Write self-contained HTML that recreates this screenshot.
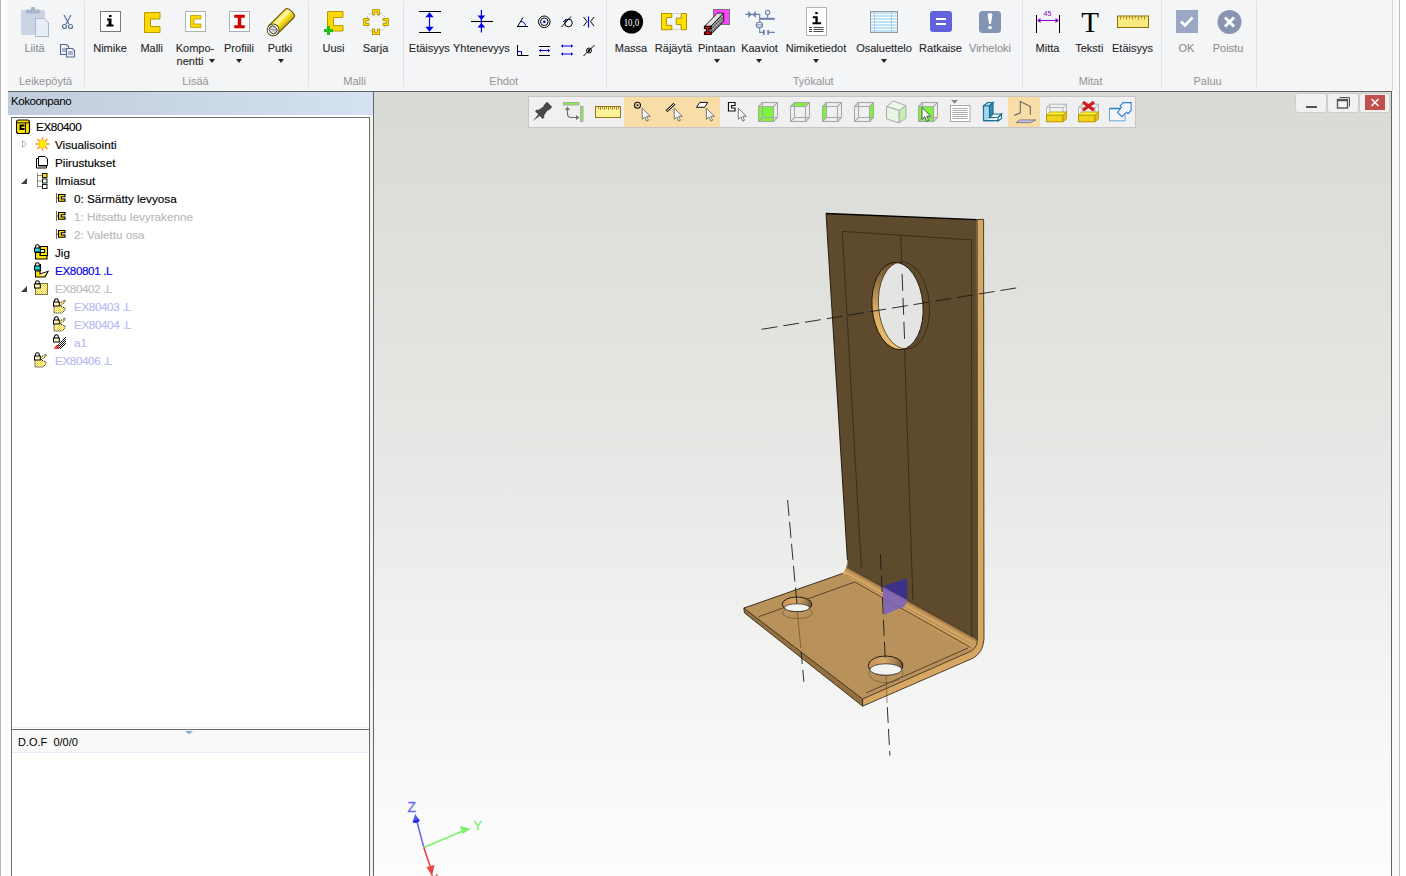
<!DOCTYPE html>
<html><head><meta charset="utf-8">
<style>
*{margin:0;padding:0;box-sizing:border-box}
html,body{width:1406px;height:876px;overflow:hidden;background:#fff;font-family:"Liberation Sans",sans-serif}
.a{position:absolute}
#ribbon{left:8px;top:0;width:1384px;height:91px;background:#f4f5f7}
.sep{position:absolute;top:1px;width:1px;height:86px;background:#dfe1e4}
.lbl{position:absolute;-webkit-text-stroke:0.1px currentColor;font-size:11px;color:#262626;white-space:nowrap;line-height:13px;transform:translateX(-50%)}
.glbl{position:absolute;font-size:11px;color:#939393;white-space:nowrap;line-height:13px;transform:translateX(-50%);top:75px}
.dis{color:#8e8e8e}
.arr{position:absolute;width:0;height:0;border-left:3.5px solid transparent;border-right:3.5px solid transparent;border-top:4px solid #222;transform:translateX(-50%)}
#darkline{left:8px;top:91px;width:1384px;height:1px;background:#626262}
#hdr{left:8px;top:92px;width:365px;height:23px;background:linear-gradient(90deg,#c0ccd9,#d4e2f1)}
#tree{left:11px;top:117px;width:359px;height:770px;border:1px solid #6d6d6d;background:#fff}
#vp{left:373px;top:92px;width:1019px;height:790px;border-left:1px solid #646464;border-right:1px solid #646464;background:linear-gradient(180deg,#d8dad5 0%,#e7e8e5 46%,#f2f2f1 70%,#f8f8f8 84%,#fdfdfd 100%)}
.ti{position:absolute;-webkit-text-stroke:0.15px currentColor;font-size:11.7px;line-height:14px;white-space:nowrap;color:#000}
</style></head><body>
<div class="a" style="left:0;top:0;width:1px;height:876px;background:#b5b5b5"></div>
<div class="a" style="left:1399px;top:0;width:1px;height:876px;background:#bdbdbd"></div>
<div class="a" style="left:1392px;top:0;width:7px;height:876px;background:#f8f8f8"></div><div class="a" style="left:1392px;top:0;width:1px;height:91px;background:#d6d6d6"></div>
<div class="a" style="left:370px;top:115px;width:3px;height:761px;background:#f2f2f2"></div>
<div id="ribbon" class="a"></div>
<div class="lbl dis" style="left:34.5px;top:42px">Liitä</div>
<div class="lbl " style="left:110px;top:42px">Nimike</div>
<div class="lbl " style="left:151.7px;top:42px">Malli</div>
<div class="lbl " style="left:195px;top:42px">Kompo-</div>
<div class="lbl " style="left:239px;top:42px">Profiili</div>
<div class="lbl " style="left:280px;top:42px">Putki</div>
<div class="lbl " style="left:333.5px;top:42px">Uusi</div>
<div class="lbl " style="left:375.5px;top:42px">Sarja</div>
<div class="lbl " style="left:429.3px;top:42px">Etäisyys</div>
<div class="lbl " style="left:481.4px;top:42px">Yhtenevyys</div>
<div class="lbl " style="left:631px;top:42px">Massa</div>
<div class="lbl " style="left:673.5px;top:42px">Räjäytä</div>
<div class="lbl " style="left:716.7px;top:42px">Pintaan</div>
<div class="lbl " style="left:759.5px;top:42px">Kaaviot</div>
<div class="lbl " style="left:816px;top:42px">Nimiketiedot</div>
<div class="lbl " style="left:884px;top:42px">Osaluettelo</div>
<div class="lbl " style="left:940.5px;top:42px">Ratkaise</div>
<div class="lbl dis" style="left:990px;top:42px">Virheloki</div>
<div class="lbl " style="left:1047.5px;top:42px">Mitta</div>
<div class="lbl " style="left:1089.3px;top:42px">Teksti</div>
<div class="lbl " style="left:1132.5px;top:42px">Etäisyys</div>
<div class="lbl dis" style="left:1186.5px;top:42px">OK</div>
<div class="lbl dis" style="left:1228px;top:42px">Poistu</div>
<div class="lbl" style="left:190px;top:55px">nentti</div>
<div class="arr" style="left:211.5px;top:59px"></div>
<div class="arr" style="left:238.7px;top:59px"></div>
<div class="arr" style="left:280.5px;top:59px"></div>
<div class="arr" style="left:716.7px;top:59px"></div>
<div class="arr" style="left:759.3px;top:59px"></div>
<div class="arr" style="left:815.5px;top:59px"></div>
<div class="arr" style="left:883.5px;top:59px"></div>
<div class="glbl" style="left:45.5px">Leikepöytä</div>
<div class="glbl" style="left:195.5px">Lisää</div>
<div class="glbl" style="left:354.6px">Malli</div>
<div class="glbl" style="left:503.7px">Ehdot</div>
<div class="glbl" style="left:813.2px">Työkalut</div>
<div class="glbl" style="left:1090.6px">Mitat</div>
<div class="glbl" style="left:1207.6px">Paluu</div>
<div class="sep" style="left:84px"></div>
<div class="sep" style="left:308px"></div>
<div class="sep" style="left:403px"></div>
<div class="sep" style="left:606px"></div>
<div class="sep" style="left:1022px"></div>
<div class="sep" style="left:1161px"></div>
<div class="sep" style="left:1256px"></div>
<svg class="a" style="left:0;top:0" width="1406" height="91" viewBox="0 0 1406 91">
<!-- Liita clipboard -->
<rect x="21" y="10" width="24" height="25" rx="1.5" fill="#c9d4e4"/>
<rect x="26" y="9.5" width="14" height="4" rx="1" fill="#a9b7cc"/>
<rect x="31" y="7" width="4" height="4" rx="1" fill="#a9b7cc"/>
<path d="M35.5 18.5h9l4 4v14h-13z" fill="#e8eef8" stroke="#a9b8cc"/>
<!-- scissors -->
<g fill="none" stroke="#56709a" stroke-width="1.2"><path d="M64 15l5 9M71 15l-5 9"/><circle cx="64.5" cy="26.5" r="2"/><circle cx="70.5" cy="26.5" r="2"/></g>
<!-- copy -->
<g fill="#f4f5f7" stroke="#52689a" stroke-width="1.1"><path d="M60.5 44.5h6l2 2v8h-8z"/><path d="M66.5 48.5h6l2 2v6.5h-8z"/></g>
<g stroke="#52689a" stroke-width="0.9"><path d="M62 49h4M62 51h4M68 52h5M68 54h5"/></g>
<!-- Nimike -->
<rect x="100.5" y="11.5" width="20" height="20" fill="#fff" stroke="#7a7a7a"/>
<g fill="#000"><rect x="109" y="15" width="2.5" height="2"/><path d="M107 18.5h4.5v6h2v2h-7v-2h2v-4h-1.5z"/></g>
<!-- Malli C -->
<path d="M144.5 12.5h15.5v6.5h-9.5v7.5h9.5v6h-15.5z" fill="#ffd700" stroke="#b79b00"/>
<!-- Komponentti -->
<rect x="185.5" y="11.5" width="20" height="20" fill="#fff" stroke="#b0b0b0"/>
<path d="M190.5 15.5h10.5v3.5h-7v5h7v3.5h-10.5z" fill="#ffd700" stroke="#b79b00" stroke-width="0.8"/>
<!-- Profiili -->
<rect x="229.5" y="11.5" width="20" height="20" fill="#fff" stroke="#b0b0b0"/>
<path d="M234.5 15h10v2.5h-3.5v8h3.5v2.5h-10v-2.5h3.5v-8h-3.5z" fill="#e00000" stroke="#900" stroke-width="0.5"/>
<!-- Putki -->
<defs><linearGradient id="tubeg" x1="0" y1="0" x2="0" y2="1"><stop offset="0" stop-color="#f8e030"/><stop offset="0.35" stop-color="#fff8c0"/><stop offset="0.5" stop-color="#ffe830"/><stop offset="1" stop-color="#c8a800"/></linearGradient></defs>
<g transform="translate(273.1 29.9) rotate(-45)">
<path d="M0 -6 H23.5 A2.8 6 0 0 1 23.5 6 H0 Z" fill="url(#tubeg)" stroke="#5e4c00" stroke-width="1"/>
<circle cx="0" cy="0" r="5.9" fill="#fff" stroke="#5e4c00" stroke-width="1"/>
<ellipse cx="0" cy="0" rx="3.6" ry="4.2" fill="#d8d8d8" stroke="#333" stroke-width="0.9"/>
<path d="M-1 -2.5 L1.5 2.5" stroke="#999" stroke-width="1.2"/>
</g>
<!-- Uusi -->
<path d="M327.5 11.5h15.5v6h-9.5v8h9.5v5.5h-15.5z" fill="#ffd700" stroke="#b79b00"/>
<path d="M327 26h3v3h3v3h-3v3h-3v-3h-3v-3h3z" fill="#19c119"/>
<!-- Sarja -->
<circle cx="376" cy="22" r="10.2" fill="none" stroke="#b0b0b0" stroke-width="0.9" stroke-dasharray="2.2 1.8"/>
<g fill="#ffe000" stroke="#b08e00" stroke-width="0.9">
<path d="M372.5 9.5h7v5.5h-2.2v-3.4h-2.6v3.4h-2.2z"/>
<path d="M372.5 34.5h7v-5.5h-2.2v3.4h-2.6v-3.4h-2.2z"/>
<path d="M363.5 18.5v7h5.5v-2.2h-3.4v-2.6h3.4v-2.2z"/>
<path d="M388.5 18.5v7h-5.5v-2.2h3.4v-2.6h-3.4v-2.2z"/>
</g>
<!-- Etaisyys -->
<g stroke="#000" stroke-width="1.2"><path d="M419 11.5h22M419 32.5h22"/></g>
<path d="M429.5 14v17" stroke="#0000ee" stroke-width="1.1"/>
<path d="M425.3 17.2l4.2-5 4.2 5zM425.3 26.8l4.2 5 4.2-5z" fill="#0000ee"/>
<!-- Yhtenevyys -->
<path d="M471 21.5h22" stroke="#000" stroke-width="1.1"/>
<path d="M481.4 10v22.5" stroke="#0000ee" stroke-width="1.2"/>
<path d="M477.5 15.5l3.9 4.5 3.9-4.5zM477.5 27.5l3.9-4.5 3.9 4.5z" fill="#0000ee"/>
<!-- small constraints row1 -->
<g fill="none" stroke="#000" stroke-width="1">
<path d="M517 26.5h11M517.5 26.5l5.5-9"/>
<circle cx="544.3" cy="21.8" r="5.8"/><circle cx="544.3" cy="21.8" r="3.8"/>
<circle cx="568.5" cy="23" r="3.8"/><path d="M561.5 27l9.5-10.5"/>
<path d="M583.5 17l3.5 4.5-3.5 4.5M594 17l-3.5 4.5 3.5 4.5"/>
</g>
<path d="M521 21.5a5 5 0 0 1 4.5 5" stroke="#0000ee" fill="none" stroke-width="1"/>
<circle cx="544.3" cy="21.8" r="1.3" fill="#0000ee"/>
<path d="M563 22l3-3" stroke="#0000ee" stroke-width="1"/>
<path d="M588.5 16.5v11" stroke="#0000ee" stroke-width="1.2"/>
<!-- row2 -->
<g fill="none" stroke="#000" stroke-width="1">
<path d="M517.5 45v10.5h11"/>
<path d="M539 46.5h11M539 55.5h11"/>
<path d="M583.5 56l11-11"/><circle cx="589" cy="50.5" r="2.5"/>
</g>
<circle cx="589" cy="50.5" r="1.3" fill="#000"/>
<g stroke="#0000ee" stroke-width="1.1" fill="none"><path d="M518 51.5h3.5v3.5" stroke-width="1"/><path d="M539.5 50.5h10"/><path d="M561.5 46h11M561.5 54h11"/></g>
<path d="M539 50.5l2-1.8v3.6zM550 50.5l-2-1.8v3.6zM561 46l2-1.8v3.6zM573 46l-2-1.8v3.6zM561 54l2-1.8v3.6zM573 54l-2-1.8v3.6z" fill="#0000ee"/>
<!-- Massa -->
<circle cx="631.6" cy="22" r="11.5" fill="#000"/>
<text x="631.4" y="26" font-family="Liberation Serif" font-size="11" fill="#fff" text-anchor="middle" textLength="15.5" lengthAdjust="spacingAndGlyphs">10,0</text>
<!-- Rajayta -->
<path d="M661.5 13.5h10.3v4h-5.4v7.8h5.4v4.4h-10.3z" fill="#ffe000" stroke="#b08e00" stroke-width="1"/>
<path d="M686.5 13.5v16.2h-5.3v-5.2h-4.9v-6.3h4.9v-4.7z" fill="#ffe000" stroke="#b08e00" stroke-width="1"/>
<path d="M672.5 13.5h8.5M672.5 29.5h8.5" stroke="#999" stroke-width="0.8" stroke-dasharray="1 1"/>
<!-- Pintaan -->
<defs><pattern id="chk" width="1.4" height="1.4" patternUnits="userSpaceOnUse"><rect width="1.4" height="1.4" fill="#eee"/><rect width="0.7" height="0.7" fill="#222"/><rect x="0.7" y="0.7" width="0.7" height="0.7" fill="#222"/></pattern></defs>
<rect x="713.5" y="9.5" width="16" height="15" fill="#ff44ff" stroke="#777" stroke-width="1"/>
<path d="M704.7 26.1 L717.4 13.1 H723.7 L711 26.1 Z" fill="#e0e0e0" stroke="#111" stroke-width="0.9" stroke-linejoin="round"/>
<path d="M711 26.1 L723.7 13.1 V21.5 L711 34.2 Z" fill="url(#chk)" stroke="#111" stroke-width="0.9" stroke-linejoin="round"/>
<path d="M704.5 26.5h6.5v2.2h-2v3.3h2v2.5h-6.5v-2.5h2v-3.3h-2z" fill="#ff0000" stroke="#000" stroke-width="1.2"/>
<!-- Kaaviot -->
<g stroke="#6b82a8" stroke-width="1.1" fill="none">
<path d="M745.2 14.4h14.5v18h3.6M767.6 14.8v4M764 32.4h-1M768.2 32.4h6.6M756 24.9h7"/>
<circle cx="767.6" cy="12.5" r="2.2"/>
</g><ellipse cx="759.4" cy="24.9" rx="3.2" ry="2.7" fill="#f4f5f7" stroke="#6b82a8" stroke-width="1.1"/><path d="M756.5 24.9h6" stroke="#6b82a8" stroke-width="1"/>
<path d="M759.7 18.8h15.1" stroke="#6b82a8" stroke-width="2"/>
<path d="M763.9 30v4.8M768.2 30v4.8" stroke="#6b82a8" stroke-width="1.8"/>
<path d="M748.2 11v6.9l3.6-3.45zM755.8 11v6.9l-3.4-3.45z" fill="#6b82a8"/>
<!-- Nimiketiedot -->
<rect x="806.5" y="7.5" width="20" height="28" fill="#fff" stroke="#b4b4b4"/>
<g fill="#000"><rect x="815.3" y="12" width="2.4" height="2.2"/><path d="M812.8 16.2h4.9v6h3.4v2h-8.6v-2h2.9v-4h-2.6z"/></g>
<path d="M809 27.5h3M813.5 27.5h10M809 29.5h3M813.5 29.5h10M809 31.5h3M813.5 31.5h10" stroke="#333" stroke-width="0.9"/>
<!-- Osaluettelo -->
<rect x="870.5" y="11.5" width="27" height="21" fill="#c0e2fa" stroke="#999"/>
<path d="M871 14.5h26M871 17.5h26M871 20.5h26M871 23.5h26M871 26.5h26M871 29.5h26" stroke="#fff" stroke-width="1"/>
<path d="M874.5 12v20M891.5 12v20" stroke="#a0d0f4" stroke-width="1"/>
<!-- Ratkaise -->
<rect x="930" y="11" width="22" height="21" rx="3" fill="#6262dc"/>
<path d="M936 19h10M936 24h10" stroke="#fff" stroke-width="2"/>
<!-- Virheloki -->
<rect x="979" y="11" width="22" height="22" rx="3.5" fill="#8494b4"/>
<path d="M987.6 15a2.4 2 0 0 1 4.8 0l-1.5 9h-1.8z" fill="#fff"/><ellipse cx="990" cy="27.6" rx="2" ry="1.6" fill="#fff"/>
<!-- Mitta -->
<path d="M1036.5 15v18M1059.5 15v18" stroke="#000" stroke-width="1"/>
<path d="M1038 20.5h20" stroke="#8a00c8" stroke-width="1.1"/>
<path d="M1037 20.5l3.5-2.5v5zM1059 20.5l-3.5-2.5v5z" fill="#8a00c8"/>
<text x="1047.5" y="16" font-family="Liberation Sans" font-size="7" fill="#8a00c8" text-anchor="middle">45</text>
<!-- Teksti -->
<text x="1090" y="32.4" font-family="Liberation Serif" font-size="29" fill="#000" text-anchor="middle">T</text>
<!-- ruler -->
<rect x="1117.5" y="16" width="31" height="11.5" fill="#f8ea80" stroke="#8c6e00"/>
<path d="M1120.5 16.5v3M1123.5 16.5v2M1126.5 16.5v3M1129.5 16.5v2M1132.5 16.5v3M1135.5 16.5v2M1138.5 16.5v3M1141.5 16.5v2M1144.5 16.5v3" stroke="#8c6e00" stroke-width="0.8"/>
<!-- OK -->
<rect x="1176" y="10" width="22" height="23" fill="#9aa8c6"/>
<path d="M1181 21.5l4 4 7.5-8" stroke="#fff" stroke-width="2.6" fill="none"/>
<!-- Poistu -->
<circle cx="1229.5" cy="22" r="12" fill="#8894b0"/>
<path d="M1225 17.5l9 9M1234 17.5l-9 9" stroke="#fff" stroke-width="3"/>
</svg>
<div class="a" style="left:8px;top:90px;width:1384px;height:1px;background:#f8f8f9"></div><div id="darkline" class="a"></div>
<div id="hdr" class="a"></div>
<div id="tree" class="a"></div>
<div class="a" style="left:11px;top:94px;font-size:11.5px;line-height:14px;color:#000;letter-spacing:-0.45px">Kokoonpano</div>
<div class="ti" style="left:36px;top:119.5px;color:#000;letter-spacing:-0.4px;">EX80400</div>
<div class="ti" style="left:55px;top:137.5px;color:#000;">Visualisointi</div>
<div class="ti" style="left:55px;top:155.5px;color:#000;">Piirustukset</div>
<div class="ti" style="left:55px;top:173.5px;color:#000;">Ilmiasut</div>
<div class="ti" style="left:74px;top:191.5px;color:#000;">0: Särmätty levyosa</div>
<div class="ti" style="left:74px;top:209.5px;color:#b9b9b9;">1: Hitsattu levyrakenne</div>
<div class="ti" style="left:74px;top:227.5px;color:#b9b9b9;">2: Valettu osa</div>
<div class="ti" style="left:55px;top:245.5px;color:#000;">Jig</div>
<div class="ti" style="left:55px;top:263.5px;color:#0000f0;letter-spacing:-0.4px;">EX80801 .L</div>
<div class="ti" style="left:55px;top:281.5px;color:#bdbdbd;letter-spacing:-0.4px;">EX80402 .L</div>
<div class="ti" style="left:74px;top:299.5px;color:#b8b8f2;letter-spacing:-0.4px;">EX80403 .L</div>
<div class="ti" style="left:74px;top:317.5px;color:#b8b8f2;letter-spacing:-0.4px;">EX80404 .L</div>
<div class="ti" style="left:74px;top:335.5px;color:#b8b8f2;">a1</div>
<div class="ti" style="left:55px;top:353.5px;color:#b8b8f2;letter-spacing:-0.4px;">EX80406 .L</div>
<svg class="a" style="left:0;top:0" width="372" height="380" viewBox="0 0 372 380">
<defs>
<pattern id="dy" width="2" height="2" patternUnits="userSpaceOnUse"><rect width="2" height="2" fill="#fff"/><rect width="1" height="1" fill="#ffd800"/><rect x="1" y="1" width="1" height="1" fill="#ffd800"/></pattern>
<pattern id="dk" width="2" height="2" patternUnits="userSpaceOnUse"><rect width="2" height="2" fill="#fff"/><rect width="1" height="1" fill="#111"/><rect x="1" y="1" width="1" height="1" fill="#111"/></pattern>
</defs>
<rect x="16.5" y="120" width="13" height="13.5" rx="2" fill="#ffe100" stroke="#000" stroke-width="1.1"/><path d="M17 122.8h12M25.5 123v10" stroke="#000" stroke-width="0.9"/><path d="M24.5 124.5h-5v5.5h5v-2h-3v-1.5h3z" fill="#000"/><g stroke="#ff8a20" stroke-width="1.3"><path d="M42.5 137v14M35.5 144h14M37.5 139l10 10M47.5 139l-10 10"/></g><circle cx="42.5" cy="144" r="4" fill="#ffee00" stroke="#ffb000" stroke-width="0.6"/><path d="M22.5 140.5l4 3.5-4 3.5z" fill="#fff" stroke="#a8a8a8" stroke-width="0.9"/><path d="M36.5 158.5h2v7.5h8v2h-10z" fill="#fff" stroke="#000" stroke-width="1"/><path d="M38.5 156.5h6.5l2.5 2.5v6.5h-9z" fill="#fff" stroke="#000" stroke-width="1"/><path d="M21 184h6v-6z" fill="#404040"/><path d="M37.5 173v14M37.5 175.5h5M37.5 181h5M37.5 186.5h5" stroke="#888" stroke-width="1"/><rect x="42.5" y="173.5" width="4.5" height="4" fill="#ffe100" stroke="#000" stroke-width="0.9"/><rect x="42.5" y="179" width="4.5" height="4" fill="#fff" stroke="#000" stroke-width="0.9"/><rect x="42.5" y="184.5" width="4.5" height="4" fill="#fff" stroke="#000" stroke-width="0.9"/><path d="M56.5 193v10" stroke="#666" stroke-width="1"/><path d="M56.5 198h2" stroke="#666" stroke-width="1"/><path d="M58.5 194.5h6.5v2.2h-3.7v2.3h3.7v2.2h-6.5z" fill="#ffe100" stroke="#000" stroke-width="1.1"/><path d="M56.5 211v10" stroke="#666" stroke-width="1"/><path d="M56.5 216h2" stroke="#666" stroke-width="1"/><path d="M58.5 212.5h6.5v2.2h-3.7v2.3h3.7v2.2h-6.5z" fill="#ffe100" stroke="#000" stroke-width="1.1"/><path d="M56.5 229v10" stroke="#666" stroke-width="1"/><path d="M56.5 234h2" stroke="#666" stroke-width="1"/><path d="M58.5 230.5h6.5v2.2h-3.7v2.3h3.7v2.2h-6.5z" fill="#ffe100" stroke="#000" stroke-width="1.1"/><path d="M40 246.5H47.5V255.5H40V252.5H44.5V249.5H40Z" fill="#ffe000" stroke="#000" stroke-width="1.1"/><path d="M35.5 252.5H40V255.5H47V259H35.5Z" fill="#ffe000" stroke="#000" stroke-width="1.1"/><path d="M35.5 248.0v-1.3a1.9 1.9 0 0 1 3.8 0v1.3" fill="none" stroke="#000" stroke-width="1.1"/><rect x="34.5" y="248.0" width="5.8" height="4" fill="#1ed8e0" stroke="#000" stroke-width="1"/><path d="M40.5 264V271" stroke="#000" stroke-width="1.1"/><path d="M35.5 271H40V274L48 271.5L45 277H35.5Z" fill="#ffe000" stroke="#000" stroke-width="1.1"/><path d="M40.5 274.5L47 272L44.5 275.5H40.5Z" fill="#fff6c0"/><path d="M35.5 266.0v-1.3a1.9 1.9 0 0 1 3.8 0v1.3" fill="none" stroke="#000" stroke-width="1.1"/><rect x="34.5" y="266.0" width="5.8" height="4" fill="#1ed8e0" stroke="#000" stroke-width="1"/><path d="M21 292h6v-6z" fill="#404040"/><rect x="35" y="283" width="13" height="12" fill="url(#dy)"/><rect x="35.5" y="283.5" width="12" height="11" fill="none" stroke="#000" stroke-width="1" stroke-dasharray="1 1"/><path d="M35.5 284.0v-1.3a1.9 1.9 0 0 1 3.8 0v1.3" fill="none" stroke="#000" stroke-width="1.1"/><rect x="34.5" y="284.0" width="5.8" height="4" fill="#fff6c0" stroke="#000" stroke-width="1"/><path d="M54 306L60 303L65 300V302L60 306L65 308V310L62 313H54Z" fill="url(#dy)" stroke="#000" stroke-width="1" stroke-dasharray="1 1"/><path d="M54.5 302.0v-1.3a1.9 1.9 0 0 1 3.8 0v1.3" fill="none" stroke="#000" stroke-width="1.1"/><rect x="53.5" y="302.0" width="5.8" height="4" fill="#fff6c0" stroke="#000" stroke-width="1"/><path d="M54 324L60 321L65 318V320L60 324L65 326V328L62 331H54Z" fill="url(#dy)" stroke="#000" stroke-width="1" stroke-dasharray="1 1"/><path d="M54.5 320.0v-1.3a1.9 1.9 0 0 1 3.8 0v1.3" fill="none" stroke="#000" stroke-width="1.1"/><rect x="53.5" y="320.0" width="5.8" height="4" fill="#fff6c0" stroke="#000" stroke-width="1"/><path d="M54 349L66 336V344L61 349Z" fill="url(#dk)"/><path d="M54 349h5v-4h-3z" fill="#ff2020" opacity="0.8"/><path d="M54.5 338.0v-1.3a1.9 1.9 0 0 1 3.8 0v1.3" fill="none" stroke="#000" stroke-width="1.1"/><rect x="53.5" y="338.0" width="5.8" height="4" fill="#fff6c0" stroke="#000" stroke-width="1"/><path d="M35 360L41 357L46 354V356L41 360L46 362V364L43 367H35Z" fill="url(#dy)" stroke="#000" stroke-width="1" stroke-dasharray="1 1"/><path d="M35.5 356.0v-1.3a1.9 1.9 0 0 1 3.8 0v1.3" fill="none" stroke="#000" stroke-width="1.1"/><rect x="34.5" y="356.0" width="5.8" height="4" fill="#fff6c0" stroke="#000" stroke-width="1"/></svg>
<div class="a" style="left:12px;top:727px;width:357px;height:1px;background:#eef3fa"></div>
<div class="a" style="left:12px;top:729px;width:358px;height:1px;background:#6d6d6d"></div>
<div class="a" style="left:12px;top:730px;width:357px;height:23px;background:#f9f9f9;border-bottom:1px solid #e5eef8"></div>
<div class="a" style="left:18px;top:735px;font-size:11px;line-height:14px;color:#000;white-space:pre">D.O.F  0/0/0</div>
<svg class="a" style="left:184px;top:730px" width="10" height="6"><path d="M1 1h8l-4 3.5z" fill="#7ab0d8"/></svg>
<div id="vp" class="a"></div>
<div class="a" style="left:528px;top:96px;width:608px;height:32px;background:#f0f0f0;border:1px solid #c6c6c6"></div>
<div class="a" style="left:624px;top:97px;width:96px;height:30px;background:#f8dda7"></div>
<div class="a" style="left:1008px;top:97px;width:32px;height:30px;background:#f8dda7"></div>
<svg class="a" style="left:0;top:0" width="1406" height="876" viewBox="0 0 1406 876">
<!-- pin -->
<g transform="translate(539.75 114.25) rotate(45)" fill="#474747"><rect x="-3.6" y="-14" width="7.2" height="5.5"/><path d="M-2.6 -9h5.2l1.6 8h-8.4z"/><rect x="-5.4" y="-1.6" width="10.8" height="2.8"/><path d="M-1.1 1h2.2L0 9.5z"/></g>
<!-- icon2 -->
<rect x="563.5" y="102.5" width="15.5" height="2.5" fill="#7cf43c" stroke="#aaa" stroke-width="1"/>
<rect x="580.5" y="106.5" width="2.5" height="15" fill="#7cf43c" stroke="#aaa" stroke-width="1"/>
<path d="M567.5 108.5v5.5q0 3.5 3.5 3.5h6" fill="none" stroke="#707070" stroke-width="1.2"/>
<path d="M565 110l2.5-3.5 2.5 3.5zM576 115l3.5 2.5-3.5 2.5z" fill="#707070"/>
<!-- ruler -->
<rect x="595.5" y="106.5" width="25" height="11" fill="#fbf199" stroke="#9a7418" stroke-width="1"/>
<path d="M598.5 107v2M600.5 107v3M602.5 107v2M604.5 107v3M606.5 107v2M608.5 107v3M610.5 107v2M612.5 107v3M614.5 107v2M616.5 107v3M618.5 107v2" stroke="#9a7418" stroke-width="0.8"/>
<!-- point -->
<circle cx="637.5" cy="105.2" r="3" fill="none" stroke="#111" stroke-width="1.1"/><circle cx="637.5" cy="105.2" r="1" fill="#111"/>
<path d="M642.2 108.3v11l2.6-2.4 1.8 4.2 1.8-0.8-1.8-4h3.6z" fill="#fff" stroke="#555" stroke-width="0.8" stroke-linejoin="round"/>
<!-- line -->
<path d="M666.4 111.3l8.1-7.6" stroke="#111" stroke-width="2.6"/><path d="M666.6 111.1l7.7-7.2" stroke="#fff" stroke-width="1"/>
<path d="M674.2 108.3v11l2.6-2.4 1.8 4.2 1.8-0.8-1.8-4h3.6z" fill="#fff" stroke="#555" stroke-width="0.8" stroke-linejoin="round"/>
<!-- plane -->
<path d="M696.5 107.3l3.2-4.9h8.1l-3.2 4.9z" fill="#fff" stroke="#111" stroke-width="1"/>
<path d="M706.4 108.3v11l2.6-2.4 1.8 4.2 1.8-0.8-1.8-4h3.6z" fill="#fff" stroke="#555" stroke-width="0.8" stroke-linejoin="round"/>
<!-- C -->
<path d="M728.5 102.5h6.5v3h-3.5v2.5h3.5v3h-6.5z" fill="#fff" stroke="#111" stroke-width="1.2"/>
<path d="M738.3 108.3v11l2.6-2.4 1.8 4.2 1.8-0.8-1.8-4h3.6z" fill="#fff" stroke="#555" stroke-width="0.8" stroke-linejoin="round"/>
<rect x="758.5" y="106.5" width="15" height="15" fill="#7cf43c"/><g fill="none" stroke="#a9a9a9" stroke-width="1.1"><rect x="758.5" y="106.5" width="15" height="15"/><rect x="762.5" y="102.5" width="15" height="15"/><path d="M758.5 106.5l4-4M773.5 106.5l4-4M758.5 121.5l4-4M773.5 121.5l4-4"/></g>
<path d="M790.5 106.5l4-4h15l-4 4z" fill="#7cf43c"/><g fill="none" stroke="#a9a9a9" stroke-width="1.1"><rect x="790.5" y="106.5" width="15" height="15"/><rect x="794.5" y="102.5" width="15" height="15"/><path d="M790.5 106.5l4-4M805.5 106.5l4-4M790.5 121.5l4-4M805.5 121.5l4-4"/></g>
<path d="M822.5 106.5l4-4v15l-4 4z" fill="#7cf43c"/><g fill="none" stroke="#a9a9a9" stroke-width="1.1"><rect x="822.5" y="106.5" width="15" height="15"/><rect x="826.5" y="102.5" width="15" height="15"/><path d="M822.5 106.5l4-4M837.5 106.5l4-4M822.5 121.5l4-4M837.5 121.5l4-4"/></g>
<path d="M869.5 106.5l4-4v15l-4 4z" fill="#7cf43c"/><g fill="none" stroke="#a9a9a9" stroke-width="1.1"><rect x="854.5" y="106.5" width="15" height="15"/><rect x="858.5" y="102.5" width="15" height="15"/><path d="M854.5 106.5l4-4M869.5 106.5l4-4M854.5 121.5l4-4M869.5 121.5l4-4"/></g>
<!-- shaded cube -->
<path d="M886.5 106.5l6.5-5.5 13 4.6-6.8 4.9z" fill="#eef8e8" stroke="#aaa" stroke-width="1"/>
<path d="M886.5 106.5l12.7 4v12.4l-12.7-4z" fill="#e8f5e0" stroke="#aaa" stroke-width="1"/>
<path d="M899.2 110.5l6.8-4.9v12.4l-6.8 4.9z" fill="#c9efb8" stroke="#aaa" stroke-width="1"/>
<rect x="918.5" y="106.5" width="15" height="15" fill="#7cf43c"/><g fill="none" stroke="#a9a9a9" stroke-width="1.1"><rect x="918.5" y="106.5" width="15" height="15"/><rect x="922.5" y="102.5" width="15" height="15"/><path d="M918.5 106.5l4-4M933.5 106.5l4-4M918.5 121.5l4-4M933.5 121.5l4-4"/></g>
<path d="M922 107.4v12l2.8-2.6 2 4.5 1.9-0.9-2-4.2h3.9z" fill="#fff" stroke="#333" stroke-width="0.8" stroke-linejoin="round"/>
<!-- list -->
<path d="M951 100h7l-3.5 3.7z" fill="#888"/>
<rect x="950.5" y="105.5" width="19.5" height="16" fill="#fff" stroke="#aaa" stroke-width="1"/>
<path d="M952.5 108.5h15M952.5 110.5h15M952.5 112.5h15M952.5 114.5h15M952.5 116.5h15M952.5 118.5h15" stroke="#aaa" stroke-width="1"/>
<!-- blue L -->
<path d="M983.5 106l4-3.5h5.5l-3.5 3.5z" fill="#b8dcf0" stroke="#1e6e98" stroke-width="1.2"/>
<path d="M989.5 106l3.5-3.5v11l-3.5 3.5z" fill="#3c8cb8" stroke="#1e6e98" stroke-width="1.2"/>
<path d="M983.5 106h6v11.5h7.5l-3.5 3.2h-10z" fill="#a8d6ee" stroke="#1e6e98" stroke-width="1.2"/>
<path d="M989.5 117.5l3.5-3.5h8.5l-3.5 3.5z" fill="#fff" stroke="#1e6e98" stroke-width="1.2"/>
<path d="M998 117.5l3.5-3.5v4.5l-3.5 2.5zM983.5 120.7h14.5v-3.2" fill="#fff" stroke="#1e6e98" stroke-width="1.2"/>
<!-- polyline + plane -->
<path d="M1014 115.6l6.3-2.8v-11.3l10 5v8.2" fill="none" stroke="#6a6a6a" stroke-width="1.1"/>
<path d="M1016.2 122.6l3.6-2.7h16l-5.6 2.7z" fill="#c8c2f2" stroke="#777" stroke-width="0.9"/>
<!-- yellow boxes -->
<g fill="none" stroke="#b8b8b8" stroke-width="1"><rect x="1046.5" y="107.5" width="16.5" height="14"/><rect x="1050" y="104.2" width="16.5" height="14"/><path d="M1046.5 107.5l3.5-3.3M1063 107.5l3.5-3.3"/></g>
<path d="M1046.5 115h16.5v6.8h-16.5z" fill="#f2d21c" stroke="#b89800" stroke-width="1"/>
<path d="M1046.5 115l3.5-3h16.5l-3.5 3z" fill="#fff040" stroke="#b89800" stroke-width="0.8"/>
<path d="M1063 115l3.5-3v7l-3.5 2.8z" fill="#e0c010" stroke="#b89800" stroke-width="0.8"/>
<g fill="none" stroke="#b8b8b8" stroke-width="1"><rect x="1078.5" y="107.5" width="16.5" height="14"/><rect x="1082" y="104.2" width="16.5" height="14"/><path d="M1078.5 107.5l3.5-3.3M1095 107.5l3.5-3.3"/></g>
<path d="M1078.5 115h16.5v6.8h-16.5z" fill="#f2d21c" stroke="#b89800" stroke-width="1"/>
<path d="M1078.5 115l3.5-3h16.5l-3.5 3z" fill="#fff040" stroke="#b89800" stroke-width="0.8"/>
<path d="M1095 115l3.5-3v7l-3.5 2.8z" fill="#e0c010" stroke="#b89800" stroke-width="0.8"/>
<path d="M1083 102l11 8.3M1094 102l-11 8.3" stroke="#d01c1c" stroke-width="3.2"/>
<!-- window arrow -->
<rect x="1109.5" y="108.5" width="15.5" height="12.3" fill="#f4f6f8" stroke="#6aaad8" stroke-width="1"/>
<path d="M1109.5 108.5h15.5" stroke="#2a80d0" stroke-width="1.5"/>
<path d="M1117.5 112.5l4.5 4.2 4.5-4.5 1.5 1.5 3.1-3.2v-7.9h-7.9l-3.1 3.1 1.5 1.5z" fill="#f4f6f8" stroke="#2a80d0" stroke-width="1.1"/>
</svg>
<svg class="a" style="left:0;top:0" width="1406" height="876" viewBox="0 0 1406 876">
<defs>
<linearGradient id="bend" x1="0" y1="0" x2="0.25" y2="1"><stop offset="0" stop-color="#8a6a3c"/><stop offset="0.6" stop-color="#d4a866"/><stop offset="1" stop-color="#c09458"/></linearGradient>
<linearGradient id="holewall" x1="0" y1="0" x2="0" y2="1"><stop offset="0" stop-color="#6a5030"/><stop offset="0.5" stop-color="#d8a860"/><stop offset="1" stop-color="#f0c070"/></linearGradient>
</defs>
<!-- base top face -->
<path d="M743.8 608.1 L842.8 573.4 Q846 570 847.4 567 L977.6 639.1 Q977 648 971.2 651.1 L862.6 699 Z" fill="#b9915a"/>
<!-- bend band -->
<linearGradient id="bandg" gradientUnits="userSpaceOnUse" x1="912" y1="602" x2="907" y2="611"><stop offset="0" stop-color="#6e5230"/><stop offset="0.35" stop-color="#c09256"/><stop offset="0.7" stop-color="#dcae6a"/><stop offset="1" stop-color="#c89a5c"/></linearGradient>
<path d="M842.8 573.4 Q846.5 569 847.4 562 L847.4 567 L977.6 639.1 Q976.5 647 971.2 651.1 L855 582 Z" fill="url(#bandg)"/>
<!-- front-left thickness -->
<path d="M743.8 608.1 L862.6 699 L862.6 706.2 L744.5 613 Z" fill="#94703e" stroke="#2a1e10" stroke-width="0.8" stroke-linejoin="round"/>
<!-- right thickness -->
<path d="M862.6 699 L971.2 651.1 Q977.5 647 977.5 638.3 L977.2 219.6 L983.6 219.3 L984 639.1 Q983 653 972.8 658.3 L862.6 706.2 Z" fill="#d6a762" stroke="#2a1e10" stroke-width="0.8" stroke-linejoin="round"/>
<!-- vertical face -->
<path d="M826 213.5 L976.7 219.6 L977.6 639.1 L847.4 567 Q847.4 563 847.4 560 Z" fill="#5e4a2c"/>
<path d="M826 213.5 L976.7 219.6" stroke="#000" stroke-width="1.3"/>
<path d="M826 213.5 L847.4 560" stroke="#1a1208" stroke-width="0.9"/>
<!-- face lines -->
<g fill="none" stroke="#2e2414" stroke-width="0.7">
<path d="M842.2 231.4 L971.5 239.9 L971.8 636"/>
<path d="M842.2 231.4 L861.4 568.3"/>
<path d="M900.8 236 L912.9 600"/>
<path d="M847.4 567 L977.6 639.1"/>
<path d="M855 582 L970.5 647.5"/><path d="M846 574.5 L974 645" stroke="#5a4428" stroke-width="0.4"/>
<path d="M758.8 616.7 L854.7 582"/>
<path d="M866 693 L968 648"/>
</g>
<path d="M743.8 608.1 L842.8 573.4" stroke="#2a1e10" stroke-width="0.9"/>
<!-- vertical plate hole -->
<g transform="rotate(-4.5 897.5 306)">
<clipPath id="hc"><ellipse cx="897.5" cy="306" rx="25.5" ry="43.7"/></clipPath>
<ellipse cx="897.5" cy="306" rx="25.5" ry="43.7" fill="url(#holewall)"/>
<ellipse cx="904" cy="306" rx="25.5" ry="43.7" fill="#e4e5e2" clip-path="url(#hc)"/>
<ellipse cx="897.5" cy="306" rx="25.5" ry="43.7" fill="none" stroke="#1a1208" stroke-width="0.9"/>
<ellipse cx="904" cy="306" rx="25.5" ry="43.7" fill="none" stroke="#2a2010" stroke-width="0.7"/>
</g>
<!-- base holes -->
<linearGradient id="wallg" x1="0" y1="0" x2="1" y2="0"><stop offset="0" stop-color="#c49050"/><stop offset="0.45" stop-color="#d8a866"/><stop offset="0.8" stop-color="#a88050"/><stop offset="1" stop-color="#6a4e2a"/></linearGradient>
<ellipse cx="797.6" cy="612.9" rx="15" ry="5.7" fill="none" stroke="#5a4428" stroke-width="0.5"/>
<ellipse cx="797" cy="604.3" rx="14.8" ry="7.3" fill="url(#wallg)" stroke="#111" stroke-width="0.9"/>
<ellipse cx="797" cy="607.7" rx="12.4" ry="3.9" fill="#f2f2f1" stroke="#222" stroke-width="0.7"/>
<ellipse cx="885.9" cy="673.2" rx="17" ry="9.6" fill="none" stroke="#5a4428" stroke-width="0.5"/>
<ellipse cx="885.6" cy="665.6" rx="17.4" ry="9.6" fill="url(#wallg)" stroke="#111" stroke-width="0.9"/>
<ellipse cx="885.8" cy="669.5" rx="15.8" ry="5.7" fill="#f3f3f2" stroke="#222" stroke-width="0.7"/>
<!-- blue marker -->
<path d="M882.3 586.4 L907.1 578.4 L907.1 600 Z" fill="#3a2f96" opacity="0.9"/>
<path d="M882.3 586.4 L907.1 600 Q906 608 899 608.5 L884 615.1 Z" fill="#7a62c0" opacity="0.85"/>
<!-- dashed center lines -->
<g stroke="#1a1a1a" stroke-width="0.9" fill="none">
<path d="M761.6 329.3 L1021.5 287.1" stroke-dasharray="16 6"/>
<path d="M902.1 273.9 L904.6 339.8" stroke-dasharray="17 7"/>
<path d="M787.6 500 L796.9 603.8" stroke-dasharray="16 6"/>
<path d="M801.2 652 L803.9 682" stroke-dasharray="12 6"/>
<path d="M880.4 553.8 L885.5 664" stroke-dasharray="16 6"/>
<path d="M887.3 707 L889.9 755.6" stroke-dasharray="16 6"/>
</g>
<g stroke="#5a4428" stroke-width="0.6" fill="none">
<path d="M797.3 611.6 L800.8 648"/>
<path d="M886 675.2 L887.1 703"/>
</g>
<!-- triad -->
<path d="M423.8 847.4 L416.5 820" stroke="#6a6af0" stroke-width="1.6"/>
<path d="M412.5 822 L415.2 814 L419.8 820.5 Z" fill="#5a5af0"/>
<ellipse cx="416.2" cy="821.2" rx="3.4" ry="1.6" transform="rotate(-15 416.2 821.2)" fill="#2a2ae0"/>
<path d="M423.8 847.4 L464 830.5" stroke="#7cf06c" stroke-width="1.6"/>
<path d="M460 826 L470.5 828.8 L462.5 834 Z" fill="#7cf06c"/>
<path d="M423.8 847.4 L430 866" stroke="#e84444" stroke-width="1.6"/>
<path d="M426.5 867 L432 876 L434.5 865 Z" fill="#e84444"/>
<text x="407.5" y="811.5" font-family="Liberation Sans" font-size="14" fill="#6a6af0" stroke="#6a6af0" stroke-width="0.3">Z</text>
<text x="430" y="882.5" font-family="Liberation Sans" font-size="13" fill="#e84444">X</text>
<text x="473.5" y="830" font-family="Liberation Sans" font-size="13" fill="#7cf06c" stroke="#7cf06c" stroke-width="0.3">Y</text>
</svg>
<!-- window buttons -->
<div class="a" style="left:1295px;top:93px;width:32px;height:20px;background:#f1f1ef;border:1px solid #cdcdcb;border-radius:3px"></div>
<div class="a" style="left:1327px;top:93px;width:32px;height:20px;background:#f1f1ef;border:1px solid #cdcdcb;border-radius:3px"></div>
<div class="a" style="left:1359px;top:93px;width:31px;height:20px;background:#f1f1ef;border:1px solid #cdcdcb;border-radius:3px"></div>
<div class="a" style="left:1306px;top:106px;width:11px;height:2px;background:#555"></div>
<svg class="a" style="left:1336px;top:96px" width="15" height="14"><path d="M3.5 1.5h10v9" fill="none" stroke="#555" stroke-width="1"/><rect x="1.5" y="3.5" width="10" height="8.5" fill="#f8f8f8" stroke="#555" stroke-width="1.4"/><path d="M1.5 4.5h10" stroke="#555" stroke-width="1.6"/></svg>
<div class="a" style="left:1365px;top:95px;width:20px;height:15px;background:#c0504d"></div>
<svg class="a" style="left:1365px;top:95px" width="20" height="15"><path d="M6.5 4l7 7M13.5 4l-7 7" stroke="#fff" stroke-width="1.6"/></svg>
</body></html>
